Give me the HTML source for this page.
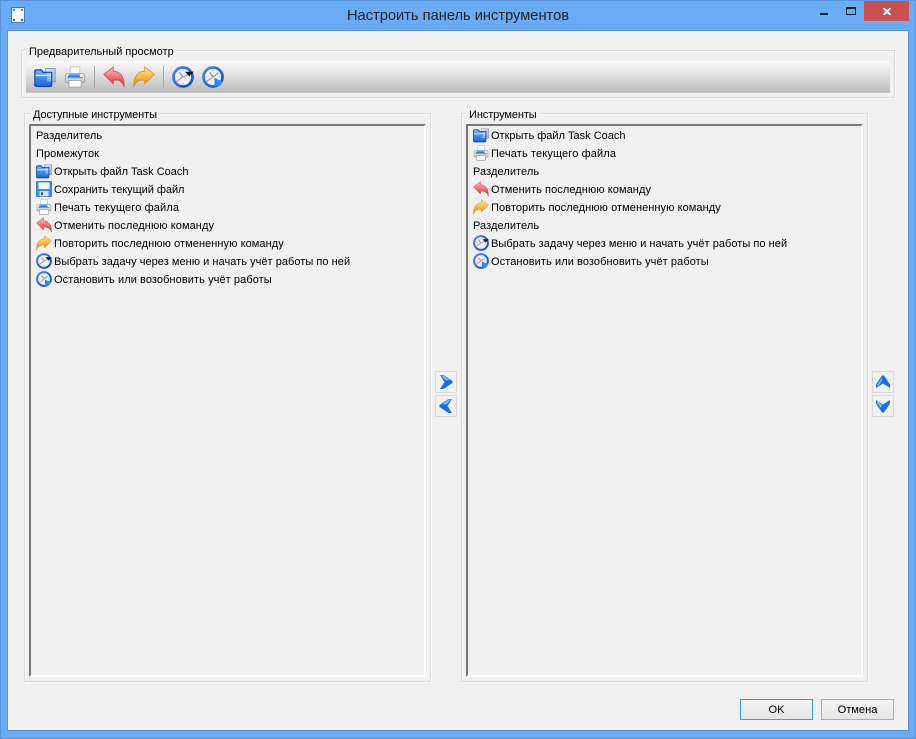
<!DOCTYPE html>
<html lang="ru">
<head>
<meta charset="utf-8">
<title>Настроить панель инструментов</title>
<style>
html,body{margin:0;padding:0;width:916px;height:739px;overflow:hidden;background:#6aabf6}
body{position:relative;font-family:"Liberation Sans",sans-serif;font-size:11px;color:#000}
div,span,svg{position:absolute;box-sizing:border-box}
.t{white-space:nowrap;line-height:14px;height:14px}
.g{border:1px solid #dcdcdc;box-shadow:inset 1px 1px 0 #fafafa,1px 1px 0 #fafafa}
.lb{border:2px solid #fff;border-top:2px solid #777;border-left:2px solid #777;background:#f0f0f0}
.cap{background:#f0f0f0;padding:0 3px;white-space:nowrap;line-height:14px;height:14px}
.b{width:22px;height:22px;border:1px solid #dadada;background:#f0f0f0}
.btn{height:21px;width:73px;background:linear-gradient(#f2f2f2,#e6e6e6);border:1px solid #acacac;text-align:center;line-height:20px;font-size:11.1px}
</style>
</head>
<body>
<svg width="0" height="0" style="left:0;top:0">
<defs>
<linearGradient id="bl" x1="0" y1="0" x2="0" y2="1"><stop offset="0" stop-color="#6fb6fb"/><stop offset="1" stop-color="#1a62da"/></linearGradient>
<linearGradient id="bk" x1="0" y1="0" x2="1" y2="1"><stop offset="0" stop-color="#e6edf5"/><stop offset="1" stop-color="#8fb2d8"/></linearGradient>
<linearGradient id="rd" x1="0" y1="0" x2="0" y2="1"><stop offset="0" stop-color="#ffc0c0"/><stop offset=".55" stop-color="#ee6a6a"/><stop offset="1" stop-color="#b82020"/></linearGradient>
<linearGradient id="or" x1="0" y1="0" x2="0" y2="1"><stop offset="0" stop-color="#ffe9a8"/><stop offset=".55" stop-color="#fbb040"/><stop offset="1" stop-color="#d87c08"/></linearGradient>
<linearGradient id="gr" x1="0" y1="0" x2="0" y2="1"><stop offset="0" stop-color="#fbfbfb"/><stop offset="1" stop-color="#c4c4c4"/></linearGradient>
<linearGradient id="pb" x1="0" y1="0" x2="0" y2="1"><stop offset="0" stop-color="#8cc6fa"/><stop offset="1" stop-color="#1670e0"/></linearGradient>
<linearGradient id="cr" x1="0" y1="0" x2="1" y2="1"><stop offset="0" stop-color="#4a88ec"/><stop offset="1" stop-color="#1a48c8"/></linearGradient>
<symbol id="open" viewBox="0 0 16 16">
<path d="M8.500 1.800h7v9.700h-7z" fill="url(#bk)" stroke="#8a9cb4" stroke-width=".7"/>
<path d="M.6 4.800V3.800q0-1 1-1h3.800l1.200 1.800h6.300v9.300q0 1-1 1H1.600q-1 0-1-1z" fill="url(#bl)" stroke="#1448b0" stroke-width=".9"/>
<path d="M1.200 6.800h11.200" stroke="#d6eaff" stroke-width="1"/>
<path d="M9.500 4.900h3v6.300h-3z" fill="#cfe2f6" opacity=".5"/>
</symbol>
<symbol id="save" viewBox="0 0 16 16">
<path d="M.5.500h15v15H.5z" fill="#3d8fec" stroke="#2a72d8" stroke-width=".8"/>
<path d="M2.500 1.500h11v6.500h-11z" fill="#f2f7fd"/>
<path d="M3.500 10h9v5.200h-9z" fill="#dbe4ee"/>
<path d="M5 11h2v3.200H5z" fill="#3a5f98"/>
</symbol>
<symbol id="print" viewBox="0 0 16 16">
<path d="M4.500.600h7v6.400h-7z" fill="#fdfdfd" stroke="#c0c0c0" stroke-width=".6"/>
<path d="M1 7.500Q1 5.500 3 5.500h10q2 0 2 2v3.500q0 1-1 1H2q-1 0-1-1z" fill="url(#gr)" stroke="#a4a4a4" stroke-width=".7"/>
<path d="M4.500 5.200h7v2.800H2.600z" fill="url(#pb)"/>
<path d="M2.400 8h11.200v1H2.400z" fill="#5a9fe8"/>
<path d="M3.500 10.500h9v4q0 .9-.9.900H4.400q-.9 0-.9-.9z" fill="#fafafa" stroke="#a4a4a4" stroke-width=".7"/>
</symbol>
<symbol id="undo" viewBox="0 0 16 16">
<path d="M.5 6 7.500.7v3c5 .2 8.300 4.200 7.900 11.700-.9-3.300-3-5.200-6.300-5.200l-1.600 .1v2.700z" fill="url(#rd)" stroke="#c04848" stroke-width=".5"/>
</symbol>
<symbol id="redo" viewBox="0 0 16 16">
<path d="M15.500 6 8.500.7v3C3.500 3.900.2 7.900.6 15.400c.9-3.300 3-5.200 6.300-5.200l1.600 .1v2.700z" fill="url(#or)" stroke="#c88a28" stroke-width=".5"/>
</symbol>
<symbol id="clk1" viewBox="0 0 16 16">
<circle cx="8" cy="8" r="6.900" fill="#eef3fa" stroke="url(#cr)" stroke-width="2"/>
<path d="M8 2.500V3.700M8 12.300v1.200M2.500 8h1.200M12.300 8h1.200" stroke="#9ab" stroke-width=".5"/>
<path d="M8 8 3.200 11.400" stroke="#ea8c8c" stroke-width="1"/>
<path d="M8 8 5.500 4.600" stroke="#888" stroke-width=".8"/>
<path d="M8 8 12 6" stroke="#999" stroke-width=".8"/>
<path d="M9.500 4.200h6.300l-3.200 3.300z" fill="#111"/>
</symbol>
<symbol id="clk2" viewBox="0 0 16 16">
<circle cx="8" cy="8" r="6.900" fill="#eef3fa" stroke="url(#cr)" stroke-width="2"/>
<path d="M8 2.500V3.700M2.500 8h1.200M12.300 8h1.200" stroke="#9ab" stroke-width=".5"/>
<path d="M8 8 3.200 11.400" stroke="#ea8c8c" stroke-width="1"/>
<path d="M8 8 5.500 4.600" stroke="#888" stroke-width=".8"/>
<path d="M8 8 12 5" stroke="#999" stroke-width=".8"/>
<path d="M9 8.500 15.200 11.300Q13.800 14.600 9 15.200z" fill="#2f8cf0"/>
</symbol>
</defs>
</svg>

<!-- window frame -->
<div style="left:0;top:0;width:916px;height:739px;border:1px solid #5a93dc"></div>
<!-- app icon -->
<div style="left:11px;top:7px;width:14px;height:16px;border:1px solid #3d79c4;background:linear-gradient(135deg,#cfe3f8,#fff 45%,#e4eef9)">
<span style="left:1px;top:1px;width:2px;height:2px;background:#5a86b8"></span>
<span style="right:1px;top:1px;width:2px;height:2px;background:#5a86b8"></span>
<span style="left:1px;bottom:1px;width:2px;height:2px;background:#4a6a90"></span>
<span style="right:1px;bottom:1px;width:2px;height:2px;background:#4a6a90"></span>
</div>
<div class="t" style="left:0;top:8px;width:916px;text-align:center;font-size:14.67px;line-height:17px;height:17px;color:#222">Настроить панель инструментов</div>
<!-- window controls -->
<div style="left:820px;top:13px;width:8px;height:2px;background:#222"></div>
<div style="left:846px;top:7px;width:10px;height:8px;border:1px solid #222;border-top:2px solid #222"></div>
<div style="left:864px;top:1px;width:45px;height:20px;background:#c75050"></div>
<svg style="left:883px;top:8px" width="8" height="7" viewBox="0 0 8 7"><path d="M.5 0 7.500 7M7.500 0 .5 7" stroke="#fff" stroke-width="2"/></svg>

<!-- client -->
<div style="left:7px;top:30px;width:902px;height:701px;background:#f0f0f0;border:1px solid #5a93dc"></div>

<!-- preview group -->
<div class="g" style="left:21px;top:50px;width:874px;height:48px"></div>
<div class="cap" style="left:26px;top:45px">Предварительный просмотр</div>
<div style="left:26px;top:61px;width:864px;height:32px;background:linear-gradient(#f8f8f8,#eeeeee 20%,#bcbcbc 97%,#cccccc)"></div>
<svg style="left:34px;top:66px" width="22" height="22"><use href="#open"/></svg>
<svg style="left:64px;top:66px" width="22" height="22"><use href="#print"/></svg>
<div style="left:94px;top:66px;width:1px;height:22px;background:#a8a8a8"></div>
<svg style="left:103px;top:66px" width="22" height="22"><use href="#undo"/></svg>
<svg style="left:133px;top:66px" width="22" height="22"><use href="#redo"/></svg>
<div style="left:163px;top:66px;width:1px;height:22px;background:#a8a8a8"></div>
<svg style="left:172px;top:66px" width="22" height="22"><use href="#clk1"/></svg>
<svg style="left:202px;top:66px" width="22" height="22"><use href="#clk2"/></svg>

<!-- left group -->
<div class="g" style="left:24px;top:113px;width:407px;height:569px"></div>
<div class="cap" style="left:30px;top:108px;letter-spacing:-.09px">Доступные инструменты</div>
<div class="lb" style="left:29px;top:124px;width:397px;height:553px"></div>
<div class="t" style="left:36px;top:129px;letter-spacing:.08px">Разделитель</div>
<div class="t" style="left:36px;top:147px;letter-spacing:.05px">Промежуток</div>
<svg style="left:36px;top:163px" width="16" height="16"><use href="#open"/></svg>
<div class="t" style="left:54px;top:165px">Открыть файл Task Coach</div>
<svg style="left:36px;top:181px" width="16" height="16"><use href="#save"/></svg>
<div class="t" style="left:54px;top:183px;letter-spacing:-.04px">Сохранить текущий файл</div>
<svg style="left:36px;top:199px" width="16" height="16"><use href="#print"/></svg>
<div class="t" style="left:54px;top:201px;letter-spacing:.13px">Печать текущего файла</div>
<svg style="left:36px;top:217px" width="16" height="16"><use href="#undo"/></svg>
<div class="t" style="left:54px;top:219px;letter-spacing:.08px">Отменить последнюю команду</div>
<svg style="left:36px;top:235px" width="16" height="16"><use href="#redo"/></svg>
<div class="t" style="left:54px;top:237px;letter-spacing:.07px">Повторить последнюю отмененную команду</div>
<svg style="left:36px;top:253px" width="16" height="16"><use href="#clk1"/></svg>
<div class="t" style="left:54px;top:255px;letter-spacing:.04px">Выбрать задачу через меню и начать учёт работы по ней</div>
<svg style="left:36px;top:271px" width="16" height="16"><use href="#clk2"/></svg>
<div class="t" style="left:54px;top:273px;letter-spacing:.08px">Остановить или возобновить учёт работы</div>

<!-- right group -->
<div class="g" style="left:461px;top:113px;width:407px;height:569px"></div>
<div class="cap" style="left:466px;top:108px;letter-spacing:-.09px">Инструменты</div>
<div class="lb" style="left:466px;top:124px;width:397px;height:553px"></div>
<svg style="left:473px;top:127px" width="16" height="16"><use href="#open"/></svg>
<div class="t" style="left:491px;top:129px">Открыть файл Task Coach</div>
<svg style="left:473px;top:145px" width="16" height="16"><use href="#print"/></svg>
<div class="t" style="left:491px;top:147px;letter-spacing:.13px">Печать текущего файла</div>
<div class="t" style="left:473px;top:165px;letter-spacing:.08px">Разделитель</div>
<svg style="left:473px;top:181px" width="16" height="16"><use href="#undo"/></svg>
<div class="t" style="left:491px;top:183px;letter-spacing:.08px">Отменить последнюю команду</div>
<svg style="left:473px;top:199px" width="16" height="16"><use href="#redo"/></svg>
<div class="t" style="left:491px;top:201px;letter-spacing:.07px">Повторить последнюю отмененную команду</div>
<div class="t" style="left:473px;top:219px;letter-spacing:.08px">Разделитель</div>
<svg style="left:473px;top:235px" width="16" height="16"><use href="#clk1"/></svg>
<div class="t" style="left:491px;top:237px;letter-spacing:.04px">Выбрать задачу через меню и начать учёт работы по ней</div>
<svg style="left:473px;top:253px" width="16" height="16"><use href="#clk2"/></svg>
<div class="t" style="left:491px;top:255px;letter-spacing:.08px">Остановить или возобновить учёт работы</div>

<!-- move buttons -->
<div class="b" style="left:435px;top:371px"></div>
<svg style="left:439px;top:374px" width="14" height="16" viewBox="0 0 14 16"><path d="M1 1H4.500L13.500 7V9L4.500 15H1L5.500 8z" fill="#1a6fe8"/><path d="M2 1.500H4.500L11 6.200H6.500z" fill="#7cbcfa"/></svg>
<div class="b" style="left:435px;top:395px"></div>
<svg style="left:439px;top:398px" width="14" height="16" viewBox="0 0 14 16"><path d="M13 1H9.500L.5 7V9L9.500 15H13L8.500 8z" fill="#1a6fe8"/><path d="M12 1.500H9.500L3 6.200H7.500z" fill="#7cbcfa"/></svg>
<div class="b" style="left:872px;top:371px"></div>
<svg style="left:875px;top:375px" width="16" height="14" viewBox="0 0 16 14"><path d="M1 13V9.500L7 .5H9L15 9.500V13L8 8.500z" fill="#1a6fe8"/><path d="M2 10 7.300 2 7 6 3 11z" fill="#7cbcfa"/></svg>
<div class="b" style="left:872px;top:395px"></div>
<svg style="left:875px;top:399px" width="16" height="14" viewBox="0 0 16 14"><path d="M1 1V4.500L7 13.500H9L15 4.500V1L8 5.500z" fill="#1a6fe8"/><path d="M2 1.500 2 4 6 9 7 5.500z" fill="#7cbcfa"/></svg>

<!-- dialog buttons -->
<div class="btn" style="left:740px;top:699px;border-color:#3c9bf2">OK</div>
<div class="btn" style="left:821px;top:699px">Отмена</div>
</body>
</html>
